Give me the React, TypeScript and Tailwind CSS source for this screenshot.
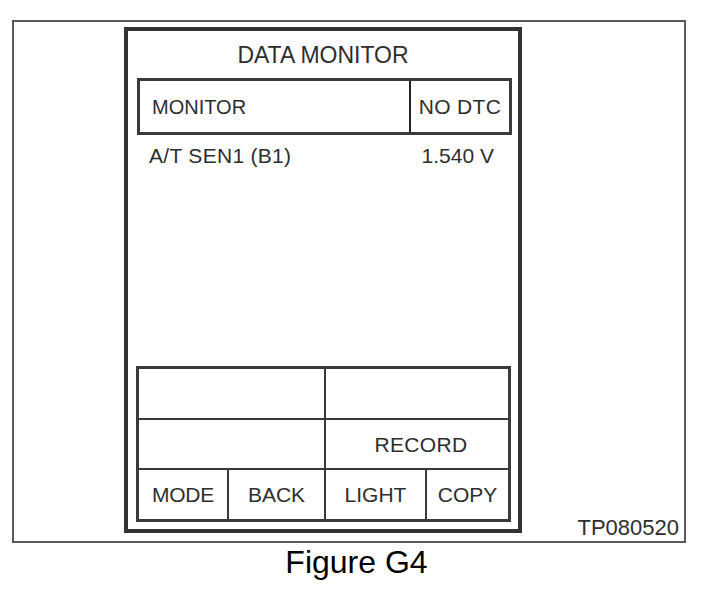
export default function App() {
  const font = { fontFamily: '"Liberation Sans", Arial, sans-serif' };

  return (
    <div className="h-[596px] w-[704px] bg-white text-[#2e2e2e]" style={font}>
      <div className="pl-[12px] pt-[20px]">
        {/* outer figure frame */}
        <div className="flex h-[523px] w-[674px] border-2 border-[#5a5a5a]">
          {/* scan tool screen */}
          <div className="ml-[110px] mt-[5px] flex h-[506px] w-[398px] flex-col border-4 border-[#333]">
            <div className="pt-[13px] text-center text-[23px] leading-[23px]">DATA MONITOR</div>

            <div className="ml-[9px] mt-[11px] flex h-[57px] w-[375px] border-[3px] border-[#3a3a3a]">
              <div className="flex w-[269px] items-center pl-[12px] text-[20px] leading-[20px]">
                MONITOR
              </div>
              <div className="flex flex-1 items-center justify-center border-l-2 border-[#222] text-[21px] leading-[21px] tracking-[0.3px]">
                NO DTC
              </div>
            </div>

            <div className="mt-[10px] flex justify-between pl-[21px] pr-[24px] text-[21px] leading-[21px]">
              <span className="tracking-[0.3px]">A/T SEN1 (B1)</span>
              <span>1.540 V</span>
            </div>

            {/* button grid */}
            <div className="mb-[7px] ml-[8px] mt-auto flex h-[156px] w-[375px] flex-col border-[3px] border-[#3a3a3a] text-[21px] leading-[21px]">
              <div className="flex h-[49px]">
                <div className="w-[185px]" />
                <div className="flex-1 border-l-2 border-[#3a3a3a]" />
              </div>
              <div className="flex h-[50px] border-t-2 border-[#3a3a3a]">
                <div className="w-[185px]" />
                <div className="flex flex-1 items-center justify-center border-l-2 border-[#3a3a3a] pl-[8px] tracking-[0.3px]">
                  RECORD
                </div>
              </div>
              <div className="flex flex-1 border-t-2 border-[#3a3a3a]">
                <div className="flex w-[88px] items-center justify-center tracking-[-0.3px]">MODE</div>
                <div className="flex w-[97px] items-center justify-center border-l-2 border-[#3a3a3a]">
                  BACK
                </div>
                <div className="flex w-[101px] items-center justify-center border-l-2 border-[#3a3a3a]">
                  LIGHT
                </div>
                <div className="flex flex-1 items-center justify-center border-l-2 border-[#3a3a3a]">
                  COPY
                </div>
              </div>
            </div>
          </div>

          <div className="mb-[2px] ml-auto mr-[5px] self-end text-[22px] leading-[22px]">TP080520</div>
        </div>
      </div>

      <div className="mt-[3px] flex justify-center pl-[9px] text-[32px] leading-[32px] text-black">
        Figure G4
      </div>
    </div>
  );
}
